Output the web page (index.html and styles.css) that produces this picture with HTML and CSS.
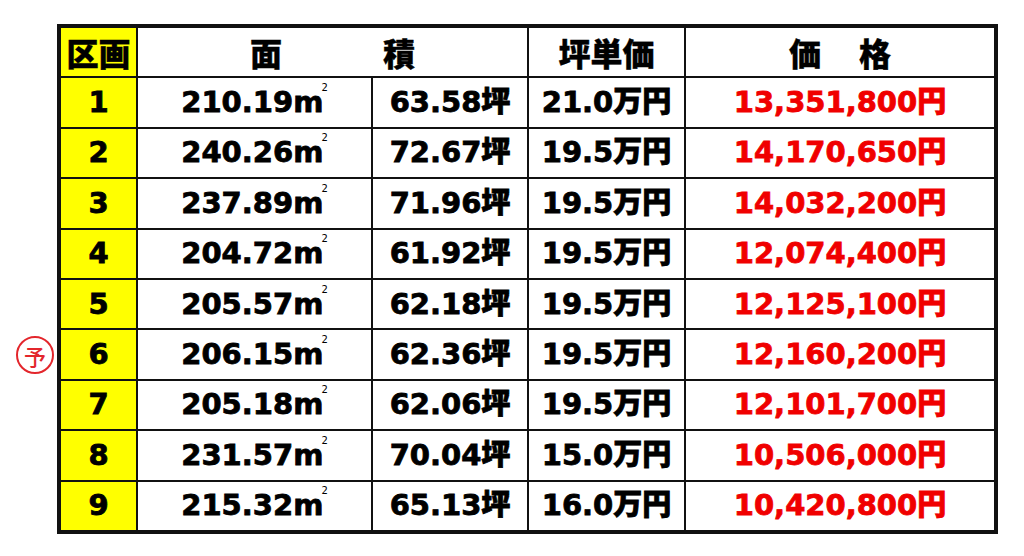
FILE: index.html
```html
<!DOCTYPE html>
<html lang="ja">
<head>
<meta charset="utf-8">
<title>区画 価格表</title>
<link rel="stylesheet" href="styles.css">
</head>
<body>
<div class="page">
  <div class="mark">予</div>
  <div class="table">
    <div class="cell lot head">区画</div>
    <div class="cell head span2"><span>面</span><span>積</span></div>
    <div class="cell head">坪単価</div>
    <div class="cell head wide"><span>価</span><span>格</span></div>

    <div class="cell lot">1</div>
    <div class="cell">210.19<span class="unit">m<sup class="sq">2</sup></span></div>
    <div class="cell">63.58坪</div>
    <div class="cell">21.0万円</div>
    <div class="cell price">13,351,800円</div>

    <div class="cell lot">2</div>
    <div class="cell">240.26<span class="unit">m<sup class="sq">2</sup></span></div>
    <div class="cell">72.67坪</div>
    <div class="cell">19.5万円</div>
    <div class="cell price">14,170,650円</div>

    <div class="cell lot">3</div>
    <div class="cell">237.89<span class="unit">m<sup class="sq">2</sup></span></div>
    <div class="cell">71.96坪</div>
    <div class="cell">19.5万円</div>
    <div class="cell price">14,032,200円</div>

    <div class="cell lot">4</div>
    <div class="cell">204.72<span class="unit">m<sup class="sq">2</sup></span></div>
    <div class="cell">61.92坪</div>
    <div class="cell">19.5万円</div>
    <div class="cell price">12,074,400円</div>

    <div class="cell lot">5</div>
    <div class="cell">205.57<span class="unit">m<sup class="sq">2</sup></span></div>
    <div class="cell">62.18坪</div>
    <div class="cell">19.5万円</div>
    <div class="cell price">12,125,100円</div>

    <div class="cell lot">6</div>
    <div class="cell">206.15<span class="unit">m<sup class="sq">2</sup></span></div>
    <div class="cell">62.36坪</div>
    <div class="cell">19.5万円</div>
    <div class="cell price">12,160,200円</div>

    <div class="cell lot">7</div>
    <div class="cell">205.18<span class="unit">m<sup class="sq">2</sup></span></div>
    <div class="cell">62.06坪</div>
    <div class="cell">19.5万円</div>
    <div class="cell price">12,101,700円</div>

    <div class="cell lot">8</div>
    <div class="cell">231.57<span class="unit">m<sup class="sq">2</sup></span></div>
    <div class="cell">70.04坪</div>
    <div class="cell">15.0万円</div>
    <div class="cell price">10,506,000円</div>

    <div class="cell lot">9</div>
    <div class="cell">215.32<span class="unit">m<sup class="sq">2</sup></span></div>
    <div class="cell">65.13坪</div>
    <div class="cell">16.0万円</div>
    <div class="cell price">10,420,800円</div>
  </div>
</div>
</body>
</html>
```
FILE: styles.css
```css
html, body {
  margin: 0;
  padding: 0;
  background: #ffffff;
}

.page {
  position: relative;
  width: 1024px;
  height: 556px;
  padding: 24px 0 0 57px;
  box-sizing: border-box;
}

.mark {
  position: absolute;
  left: 16px;
  top: 336px;
  width: 34px;
  height: 34px;
  border: 2px solid #e3262c;
  border-radius: 50%;
  color: #e3262c;
  font-family: "Noto Sans CJK JP", sans-serif;
  font-weight: 500;
  font-size: 22px;
  line-height: 34px;
  text-align: center;
}

.table {
  display: grid;
  grid-template-columns: 75px 233px 154px 155px 308px;
  grid-template-rows: repeat(10, 1fr);
  gap: 2px;
  width: 941px;
  height: 510px;
  padding: 4px;
  box-sizing: border-box;
  background: #111111;
  font-family: "DejaVu Sans", "Noto Sans CJK JP", sans-serif;
  font-weight: 900;
  font-size: 29px;
  color: #000000;
}

.cell {
  background: #ffffff;
  display: flex;
  align-items: center;
  justify-content: center;
  white-space: nowrap;
  line-height: 1;
  -webkit-text-stroke: 0.8px currentColor;
}

.lot {
  background: #ffff00;
}

.head {
  font-family: "Noto Sans CJK JP", sans-serif;
  font-size: 32px;
  -webkit-text-stroke: 0.4px currentColor;
}

.span2 {
  grid-column: span 2;
  gap: 101px;
}

.wide {
  gap: 38px;
}

.price {
  color: #f00000;
}

.unit {
  white-space: nowrap;
}

.sq {
  font-family: "DejaVu Sans", sans-serif;
  font-weight: 400;
  font-size: 10px;
  -webkit-text-stroke: 0;
  vertical-align: baseline;
  position: relative;
  top: -21px;
  margin-left: -2px;
}
```
